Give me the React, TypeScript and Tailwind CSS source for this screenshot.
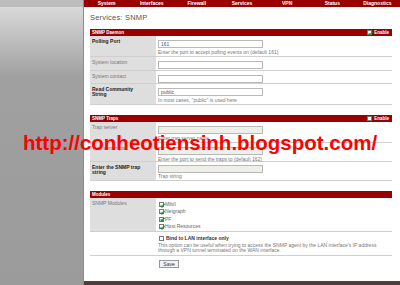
import React from 'react';

const navItems = ['System', 'Interfaces', 'Firewall', 'Services', 'VPN', 'Status', 'Diagnostics'];

const Check: React.FC<{ checked?: boolean }> = ({ checked }) => (
  <span className="relative block w-[5px] h-[5px] shrink-0 border-[0.5px] border-[#7a7a7a] bg-white">
    {checked && (
      <svg viewBox="0 0 10 10" className="absolute -left-[0.5px] -top-[0.5px] w-[5px] h-[5px] overflow-visible">
        <path d="M1.2 4.8 L4 7.8 L9 1.5" fill="none" stroke="#1f8f2a" strokeWidth="2.8" />
      </svg>
    )}
  </span>
);

const SectionHeader: React.FC<{ title: string; enable?: boolean }> = ({ title, enable }) => (
  <div className="h-[7px] bg-[#990000] flex items-center justify-between pl-[2px] pr-[3px] text-white font-bold text-[4.5px] leading-[5px]">
    <span>{title}</span>
    {enable !== undefined && (
      <span className="flex items-center gap-[2px]">
        <Check checked={enable} />
        <span>Enable</span>
      </span>
    )}
  </div>
);

const Row: React.FC<{
  label?: React.ReactNode;
  bold?: boolean;
  height: string;
  gray?: boolean;
  border?: boolean;
  children?: React.ReactNode;
}> = ({ label, bold, height, gray = true, border = true, children }) => (
  <div className={`flex ${height} ${border ? 'border-b border-[#cfcfcf]' : ''}`}>
    <div
      className={`w-[66px] shrink-0 pl-[2px] pt-[3px] text-[5px] leading-[4.5px] ${
        gray ? 'bg-[#dedede]' : 'bg-white'
      } ${bold ? 'font-bold text-[#222]' : 'text-[#777]'}`}
    >
      {label}
    </div>
    <div className="flex-1 pl-[2px] pt-[4px] text-[5px] leading-[5px]">{children}</div>
  </div>
);

const TextBox: React.FC<{ value?: string; disabled?: boolean }> = ({ value, disabled }) => (
  <div
    className={`w-[105px] h-[8px] border-[0.5px] border-[#b8b8b8] pl-[2px] flex items-center text-[5px] text-[#555] ${
      disabled ? 'bg-[#efefe9]' : 'bg-white'
    }`}
  >
    {value}
  </div>
);

const Help: React.FC<{ children: React.ReactNode }> = ({ children }) => (
  <div className="mt-[1.5px] text-[5px] leading-[5px] text-[#777]">{children}</div>
);

export default function App() {
  return (
    <div className="relative w-[400px] h-[285px] overflow-hidden flex bg-white font-['Liberation_Sans',Arial,sans-serif]">
      {/* left gray sidebar */}
      <div className="w-[84px] shrink-0 flex flex-col border-r border-[#8c8c8c]">
        <div className="h-[7px] bg-[#bdbdbd]" />
        <div className="flex-1 bg-[linear-gradient(to_bottom,#d9d9d9,#a0a0a0_70px,#9b9b9b)]" />
      </div>

      {/* main panel */}
      <div className="flex-1 flex flex-col">
        <div className="h-[7px] bg-[#990000] grid grid-cols-7 items-center text-center text-white font-bold text-[5px] leading-[5px]">
          {navItems.map((item) => (
            <span key={item}>{item}</span>
          ))}
        </div>

        <div className="flex-1 pl-[6px] pr-[8px]">
          <div className="h-[22px] flex items-center text-[7.5px] text-[#555] tracking-[0.2px]">
            Services: SNMP
          </div>

          {/* SNMP Daemon */}
          <SectionHeader title="SNMP Daemon" enable={true} />
          <Row label="Polling Port" bold height="h-[21px]">
            <TextBox value="161" />
            <Help>Enter the port to accept polling events on (default 161)</Help>
          </Row>
          <Row label="System location" height="h-[14px]">
            <div className="-mt-[0.5px]">
              <TextBox />
            </div>
          </Row>
          <Row label="System contact" height="h-[13px]">
            <div className="-mt-[0.5px]">
              <TextBox />
            </div>
          </Row>
          <Row label={<>Read Community<br />String</>} bold height="h-[21px]">
            <TextBox value="public" />
            <Help>In most cases, "public" is used here</Help>
          </Row>

          <div className="h-[10px]" />

          {/* SNMP Traps */}
          <SectionHeader title="SNMP Traps" enable={false} />
          <Row label="Trap server" height="h-[21px]">
            <TextBox disabled />
            <Help>Enter trap server name</Help>
          </Row>
          <Row label="Trap server port" height="h-[19px]">
            <TextBox disabled />
            <Help>Enter the port to send the traps to (default 162)</Help>
          </Row>
          <Row label={<>Enter the SNMP trap<br />string</>} bold height="h-[19px]">
            <div className="-mt-[1.5px]">
              <TextBox disabled />
              <Help>Trap string</Help>
            </div>
          </Row>

          <div className="h-[10px]" />

          {/* Modules */}
          <SectionHeader title="Modules" />
          <Row label="SNMP Modules" height="h-[34px]">
            <div className="flex flex-col gap-[2.4px] text-[5px] leading-[5px] text-[#666]">
              {['MibII', 'Netgraph', 'PF', 'Host Resources'].map((m) => (
                <div key={m} className="flex items-center gap-[1px] pl-[1px]">
                  <Check checked />
                  <span>{m}</span>
                </div>
              ))}
            </div>
          </Row>
          <Row gray={false} height="h-[24px]">
            <div className="flex items-center gap-[2px] pl-[1px]">
              <Check />
              <span className="font-bold text-[#333]">Bind to LAN interface only</span>
            </div>
            <div className="mt-[1.5px] leading-[5.5px] text-[#777]">
              This option can be useful when trying to access the SNMP agent by the LAN interface's IP address
              <br />
              through a VPN tunnel terminated on the WAN interface.
            </div>
          </Row>
          <Row gray={false} border={false} height="h-[16px]">
            <button className="block h-[8px] w-[20px] ml-[1px] border-[0.5px] border-[#999] bg-[#f2f2f2] text-[5px] leading-[5px] text-[#333]">
              Save
            </button>
          </Row>
        </div>

        <div className="h-[4px] border-t border-[#a02020] bg-[#4d3d3d]" />
      </div>

      {/* watermark */}
      <div className="absolute left-[23px] top-[133px] text-[20.5px] leading-[20.5px] font-bold text-[#ff0000] whitespace-nowrap">
        http://conheotiensinh.blogspot.com/
      </div>
    </div>
  );
}
